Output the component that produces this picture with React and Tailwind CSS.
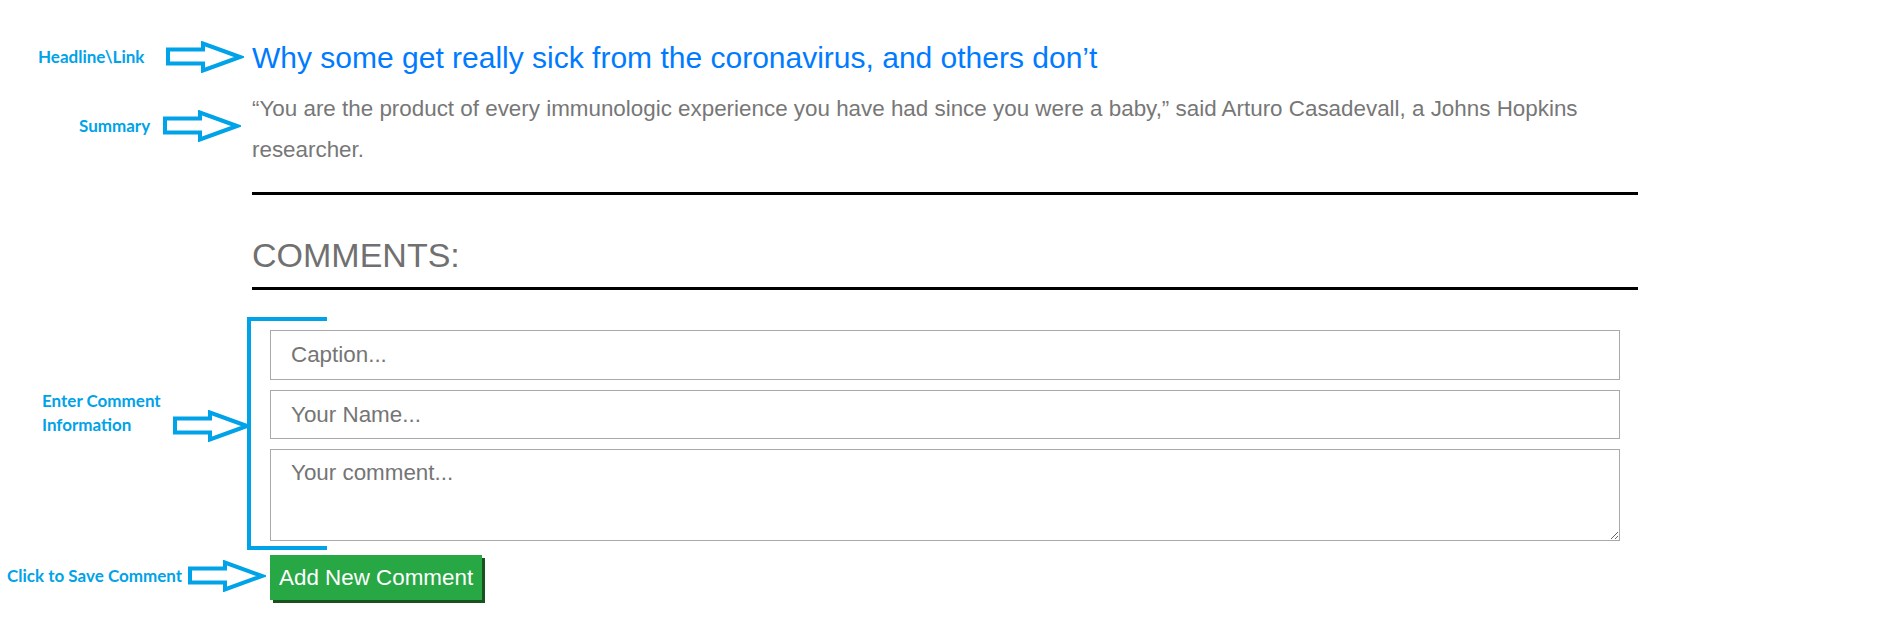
import React from 'react';

const Arrow = ({ className = '' }) => (
  <svg className={`shrink-0 ${className}`} width="78" height="32" viewBox="0 0 78 32" fill="none">
    <polygon
      points="2,8.5 37,8.5 37,2.5 74,16 37,29.5 37,22.5 2,22.5"
      stroke="#00a2e8"
      strokeWidth="4"
      strokeLinejoin="miter"
    />
  </svg>
);

const App = () => {
  return (
    <div className="relative w-full h-[629px] overflow-hidden bg-white font-['Liberation_Sans',Arial,sans-serif]">
      {/* article + comment form */}
      <div className="ml-[252px] w-[1386px] pt-[40px]">
        <a href="#" className="block text-[30px] leading-[35px] text-[#007bff]">
          Why some get really sick from the coronavirus, and others don’t
        </a>
        <p className="mt-[13px] text-[22.4px] leading-[41px] text-[#777777]">
          “You are the product of every immunologic experience you have had since you were a baby,” said Arturo Casadevall, a Johns Hopkins researcher.
        </p>
        <div className="mt-[22px] h-[3px] bg-black" />

        <h2 className="mt-[41px] text-[34px] leading-[39px] text-[#707070]">COMMENTS:</h2>
        <div className="mt-[12px] h-[3px] bg-black" />

        <form className="mt-[40px] px-[18px] flex flex-col">
          <div className="flex flex-col gap-[10px]">
            <input
              type="text"
              placeholder="Caption..."
              className="h-[50px] w-full border border-[#a9a9a9] px-[20px] text-[22.4px] outline-none placeholder:text-[#757575]"
            />
            <input
              type="text"
              placeholder="Your Name..."
              className="h-[49px] w-full border border-[#a9a9a9] px-[20px] text-[22.4px] outline-none placeholder:text-[#757575]"
            />
            <textarea
              placeholder="Your comment..."
              className="h-[92px] w-full border border-[#a9a9a9] px-[20px] pt-[10px] text-[22.4px] leading-[26px] outline-none placeholder:text-[#757575]"
            />
          </div>
          <div className="mt-[14px]">
            <button
              type="button"
              className="h-[45px] px-[9px] bg-[#28a745] text-white text-[22.4px] leading-[26px] shadow-[3px_3px_0_#17521f]"
            >
              Add New Comment
            </button>
          </div>
        </form>
      </div>

      {/* Annotations drawn over the screenshot */}
      <div className="font-['Lato','Open_Sans',sans-serif] font-bold text-[17px] leading-[20px] text-[#00a2e8]">
        <div className="absolute left-[38px] top-[41px] flex items-center">
          <span>Headline\Link</span>
          <Arrow className="ml-[22px]" />
        </div>
        <div className="absolute left-[79px] top-[110px] flex items-center">
          <span>Summary</span>
          <Arrow className="ml-[13px]" />
        </div>
        <div className="absolute left-[42px] top-[389px] flex items-start">
          <span className="leading-[24px]">
            Enter Comment
            <br />
            Information
          </span>
          <Arrow className="ml-[12px] mt-[21px]" />
        </div>
        <div className="absolute left-[7px] top-[560px] flex items-center">
          <span>Click to Save Comment</span>
          <Arrow className="ml-[6px]" />
        </div>
      </div>

      {/* bracket around the inputs */}
      <div className="absolute left-[247px] top-[317px] w-[80px] h-[233px] border-l-4 border-t-4 border-b-4 border-[#00a2e8]" />
    </div>
  );
};

export default App;
